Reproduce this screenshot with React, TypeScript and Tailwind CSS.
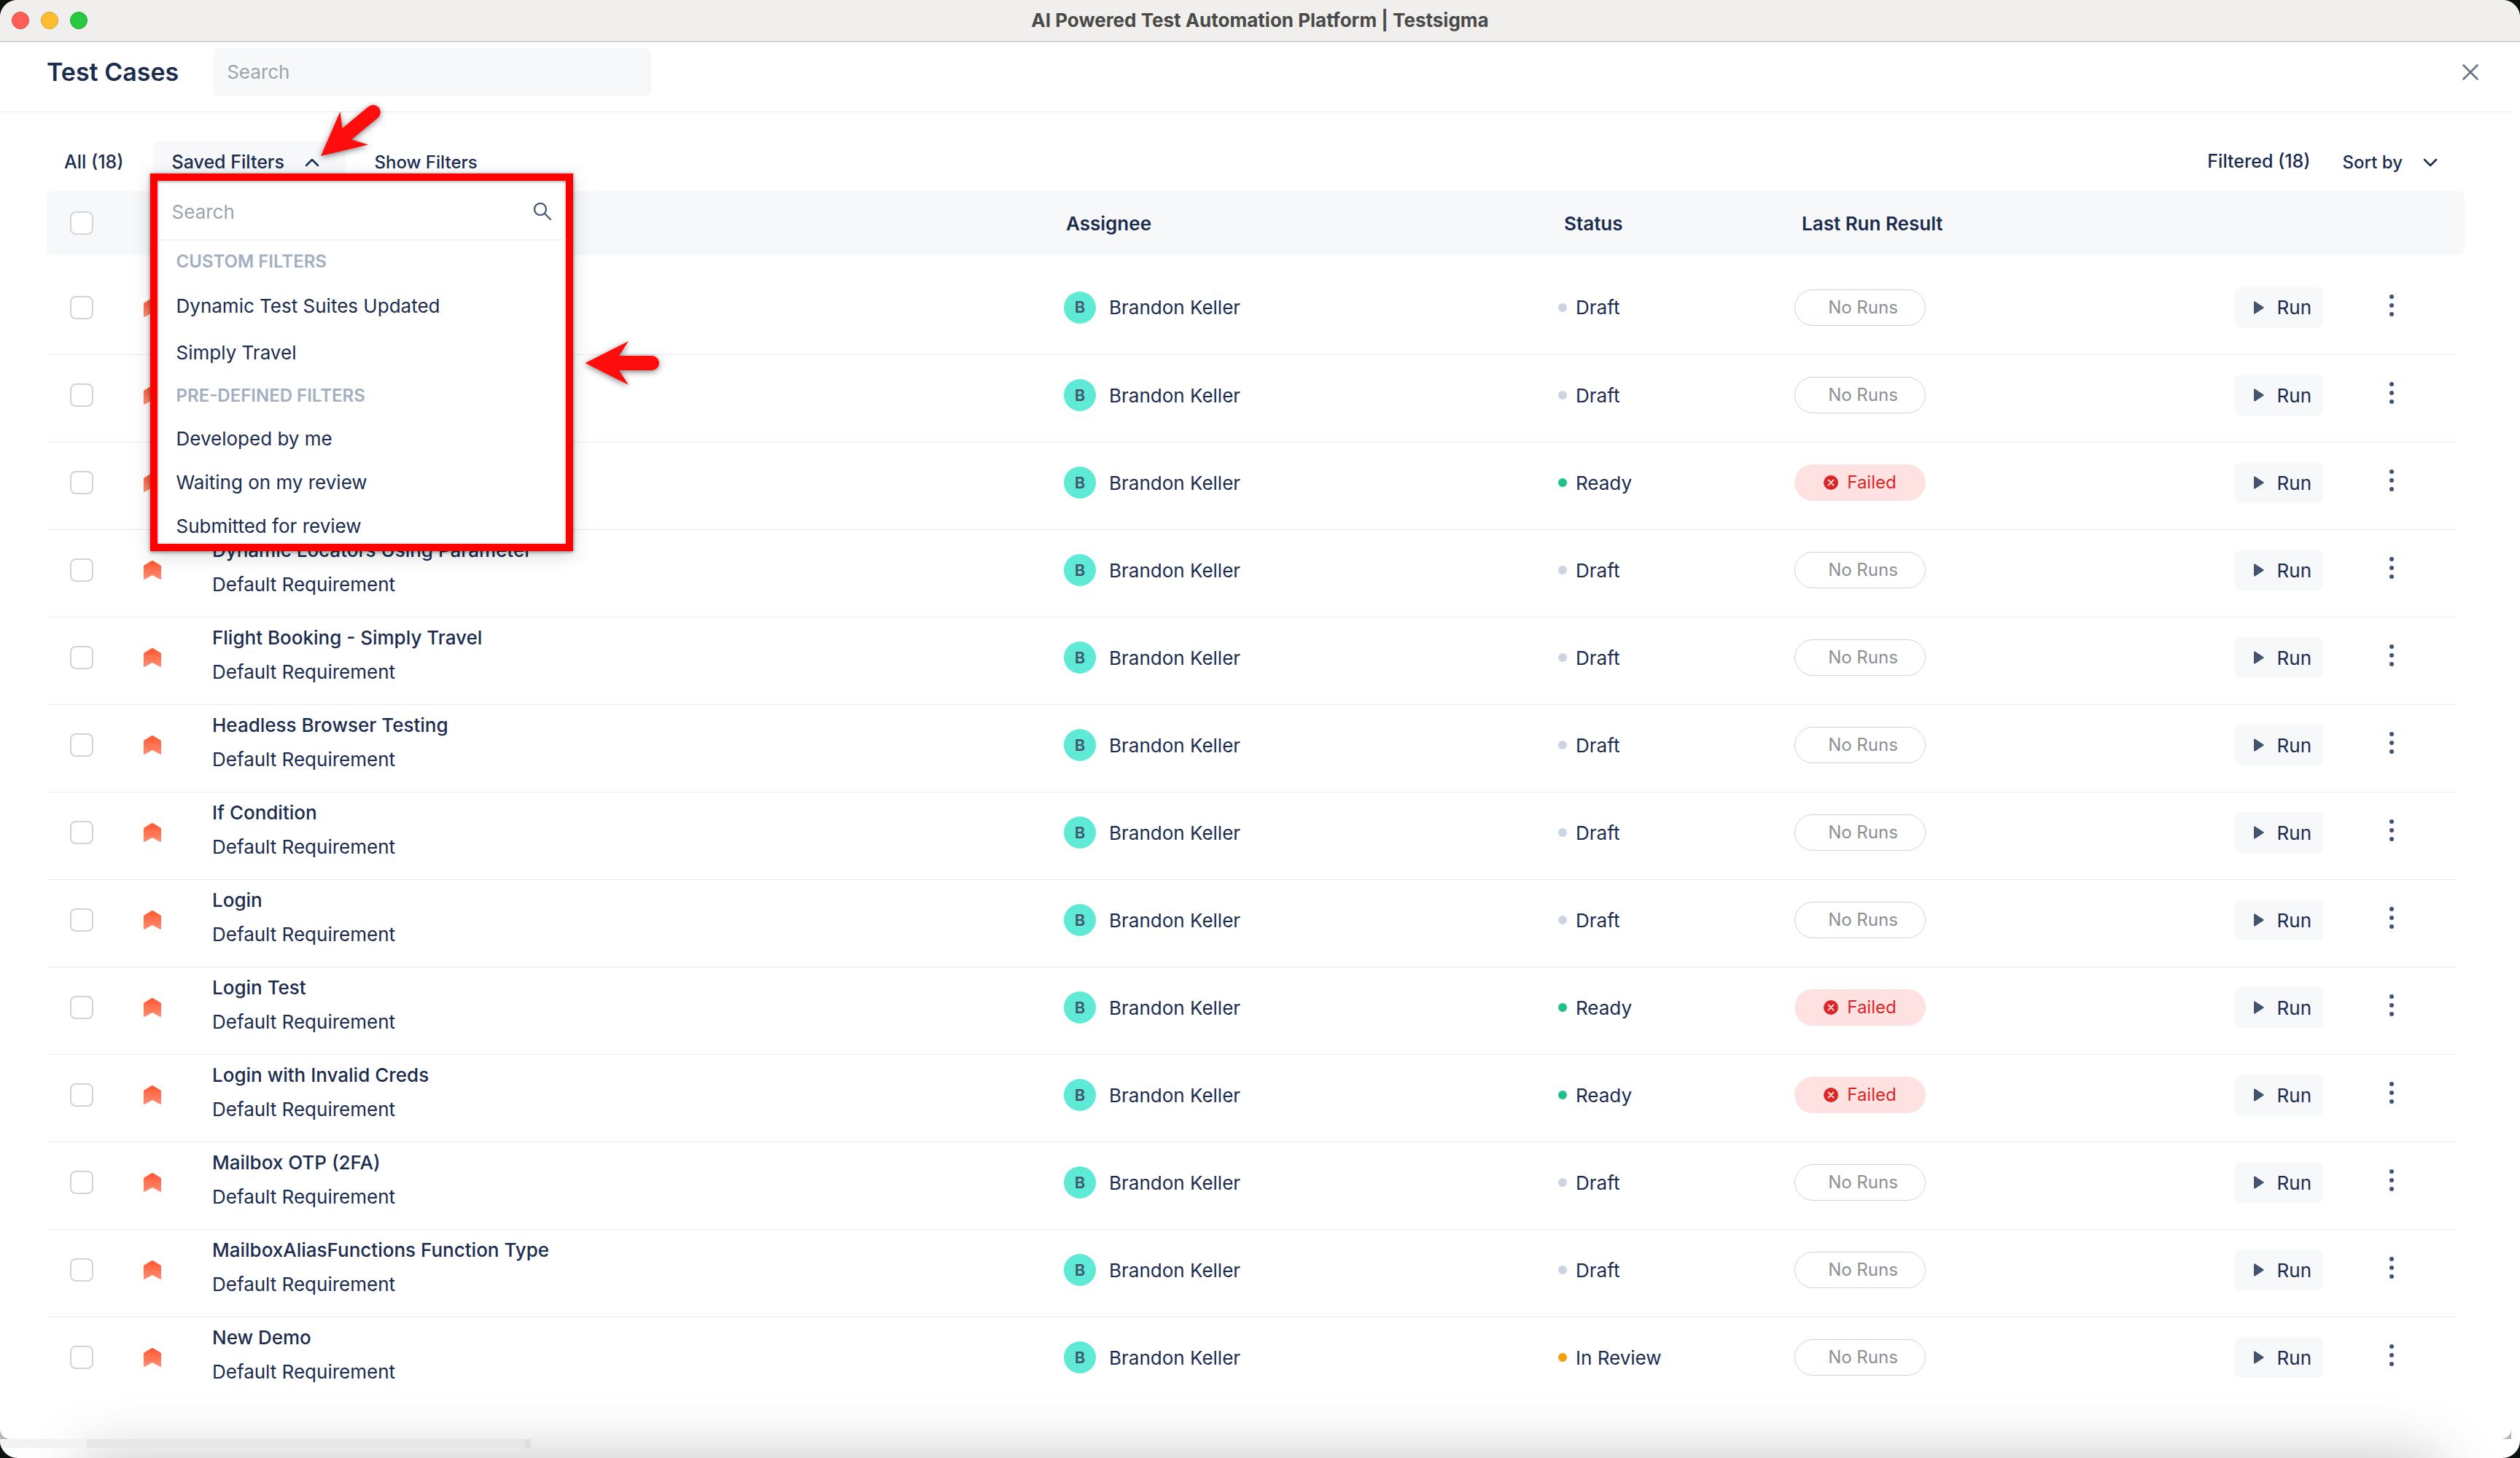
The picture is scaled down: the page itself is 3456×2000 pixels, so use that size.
import { useState } from 'react'

const savedFilters = [
    {
        title: "CUSTOM FILTERS",
        items: ["Dynamic Test Suites Updated", "Simply Travel"],
        itemClass: "h-16"
    },
    {
        title: "PRE-DEFINED FILTERS",
        items: ["Developed by me", "Waiting on my review", "Submitted for review"],
        itemClass: "h-15"
    }
]

const testCases = [
    { name: "", status: "Draft", result: "No Runs" },
    { name: "", status: "Draft", result: "No Runs" },
    { name: "", status: "Ready", result: "Failed" },
    { name: "Dynamic Locators Using Parameter", status: "Draft", result: "No Runs" },
    { name: "Flight Booking - Simply Travel", status: "Draft", result: "No Runs" },
    { name: "Headless Browser Testing", status: "Draft", result: "No Runs" },
    { name: "If Condition", status: "Draft", result: "No Runs" },
    { name: "Login", status: "Draft", result: "No Runs" },
    { name: "Login Test", status: "Ready", result: "Failed" },
    { name: "Login with Invalid Creds", status: "Ready", result: "Failed" },
    { name: "Mailbox OTP (2FA)", status: "Draft", result: "No Runs" },
    { name: "MailboxAliasFunctions Function Type", status: "Draft", result: "No Runs" },
    { name: "New Demo", status: "In Review", result: "No Runs" }
]

const statusColors: Record<string, string> = {
    "Draft": "bg-[#cbd5e1]",
    "Ready": "bg-[#1fc08b]",
    "In Review": "bg-[#f59e0b]"
}

function Checkbox({ label }: { label: string }) {
    return (
        <input
            type="checkbox"
            aria-label={label}
            className="block size-8 appearance-none rounded-lg border-2 border-[#d1d5db] bg-white checked:bg-[#1b2c4f]"
        />
    )
}

function Chevron({ up = false }: { up?: boolean }) {
    return (
        <svg width="20" height="12" viewBox="0 0 20 12" fill="none" stroke="#1b2c4f" strokeWidth="2.500" strokeLinecap="round" strokeLinejoin="round">
            <path d={up ? "M2 10 10 2l8 8" : "M2 2l8 8 8-8"} />
        </svg>
    )
}

function PriorityIcon() {
    return (
        <svg width="24" height="28" viewBox="0 0 24 28">
            <defs>
                <linearGradient id="priority" x1="0" y1="0" x2="0" y2="1">
                    <stop offset="0" stopColor="#ff5630" />
                    <stop offset="1" stopColor="#ff8f73" />
                </linearGradient>
            </defs>
            <path fill="url(#priority)" d="M11 1.300Q12 .7 13 1.300L23 7.200Q24 7.800 24 9V25.500Q24 27.800 22 26.600L13 21.500Q12 21 11 21.500L2 26.600Q0 27.800 0 25.500V9Q0 7.800 1 7.200Z" />
        </svg>
    )
}

function ResultBadge({ result }: { result: string }) {
    if (result === "Failed") {
        return (
            <span className="flex h-[50px] w-[180px] items-center justify-center gap-3 rounded-full bg-[#fee2e2] text-2xl text-[#dc2626]">
                <svg width="20" height="20" viewBox="0 0 20 20">
                    <circle cx="10" cy="10" r="10" fill="#dc2626" />
                    <path d="M6.500 6.500l7 7m0-7l-7 7" stroke="#fee2e2" strokeWidth="1.800" strokeLinecap="round" />
                </svg>
                Failed
            </span>
        )
    }
    return (
        <span className="flex h-[50px] w-[180px] items-center justify-center rounded-full border border-[#cbd5e1] pl-2 text-2xl text-[#8b8f96]">
            {result}
        </span>
    )
}

function TitleBar() {
    return (
        <div className="grid h-[58px] grid-cols-[1fr_auto_1fr] items-center border-b-2 border-[#d6d6d6] bg-[#f0efed]">
            <div className="flex gap-4 pl-4">
                <div className="size-6 rounded-full border border-[#e0443e] bg-[#ff5f57]"></div>
                <div className="size-6 rounded-full border border-[#dea123] bg-[#febc2e]"></div>
                <div className="size-6 rounded-full border border-[#1aab29] bg-[#28c840]"></div>
            </div>
            <h1 className="text-[26px] leading-8 font-bold text-[#4a4a48]">AI Powered Test Automation Platform | Testsigma</h1>
        </div>
    )
}

function SavedFiltersMenu() {
    return (
        <div className="absolute top-[44px] -left-1 z-10 h-[518px] w-[580px] overflow-hidden border-[10px] border-[#ff0000] bg-white shadow-[0_1px_5px_rgba(0,0,0,0.5),0_6px_24px_rgba(0,0,0,0.15),inset_0_1px_4px_rgba(0,0,0,0.4)]">
            <label className="flex h-[82px] items-center justify-between border-b-2 border-[#f1f2f4] px-5 pt-1">
                <input type="text" placeholder="Search" aria-label="Search filters" className="w-100 outline-none placeholder:text-[#9ca3af]" />
                <svg width="24" height="24" viewBox="0 0 24 24" fill="none" stroke="#44546f" strokeWidth="2.200" strokeLinecap="round">
                    <circle cx="9" cy="9" r="8" />
                    <path d="M15 15l8 8" />
                </svg>
            </label>
            <div className="pt-px">
                {savedFilters.map((group) => {
                    return (
                        <div key={group.title}>
                            <h3 className="flex h-14 items-center px-[26px] text-2xl font-semibold text-[#a3afc0]">{group.title}</h3>
                            {group.items.map((item) => (
                                <button key={item} className={`block w-full px-[26px] text-left hover:bg-[#f7f8fa] ${group.itemClass}`}>{item}</button>
                            ))}
                        </div>
                    )
                })}
            </div>
        </div>
    )
}

function Toolbar() {
    const [menuOpen, setMenuOpen] = useState<boolean>(true)

    return (
        <div className="flex h-[68px] items-start pr-[113px] pl-[88px] text-[25px] font-medium">
            <button className="h-[58px]">All (18)</button>
            <div className="relative ml-10 text-[26px] font-normal">
                <button onClick={() => setMenuOpen(!menuOpen)}
                    className="flex h-[58px] w-[264px] items-center justify-between rounded-lg bg-[#f7f8fa] pr-9 pl-[26px] text-[25px] font-medium">
                    Saved Filters
                    <Chevron up={menuOpen} />
                </button>
                {menuOpen && <SavedFiltersMenu />}
            </div>
            <button className="ml-10 h-[58px] text-2xl">Show Filters</button>
            <span className="ml-auto flex h-14 items-center">Filtered (18)</span>
            <button className="ml-11 flex h-[58px] items-center gap-7 text-2xl">
                Sort by
                <Chevron />
            </button>
        </div>
    )
}

function TestCaseTable() {
    return (
        <table className="w-full table-fixed border-collapse text-left">
            <thead>
                <tr className="h-22 bg-[#f7f8fa]">
                    <th className="w-[133px] rounded-l-lg pl-8"><Checkbox label="Select all" /></th>
                    <th className="w-[94px]"></th>
                    <th></th>
                    <th className="w-[678px] pl-[3px] font-semibold">Assignee</th>
                    <th className="w-[324px] pl-2 font-semibold">Status</th>
                    <th className="w-[604px] pl-[10px] font-semibold">Last Run Result</th>
                    <th className="w-[204px]"></th>
                    <th className="w-[99px]"></th>
                    <th className="w-3 rounded-r-lg"></th>
                </tr>
            </thead>
            <tbody className="before:block before:h-4">
                {testCases.map((test, index) => {
                    return (
                        <tr key={index} className="h-30 *:pb-2 not-last:[&>td:not(:last-child)]:border-b not-last:[&>td:not(:last-child)]:border-[#e8eaed]">
                            <td className="pl-8"><Checkbox label={test.name || `Test case ${index + 1}`} /></td>
                            <td><PriorityIcon /></td>
                            <td className="leading-[47px]">
                                {test.name && <div className="mb-2">
                                    <a href="#" className="block font-medium">{test.name}</a>
                                    <p>Default Requirement</p>
                                </div>}
                            </td>
                            <td>
                                <div className="flex items-center gap-[18px]">
                                    <span className="flex size-11 items-center justify-center rounded-full bg-[#5eead4] text-[22px] font-semibold text-[#44546f]">B</span>
                                    Brandon Keller
                                </div>
                            </td>
                            <td>
                                <div className="flex items-center gap-3">
                                    <span className={`size-3 rounded-full ${statusColors[test.status]}`}></span>
                                    {test.status}
                                </div>
                            </td>
                            <td><ResultBadge result={test.result} /></td>
                            <td>
                                <button className="flex h-14 w-[121px] items-center justify-between rounded-lg bg-[#f7f8fa] pr-4 pl-[26px]">
                                    <svg width="14" height="18" viewBox="0 0 14 18" fill="#44546f">
                                        <path d="M0 1.500Q0 0 1.500 .6L13.300 8.200Q14.300 9 13.300 9.800L1.500 17.400Q0 18 0 16.500Z" />
                                    </svg>
                                    Run
                                </button>
                            </td>
                            <td>
                                <button aria-label="More actions" className="block px-2 pb-[6px]">
                                    <svg width="6" height="30" viewBox="0 0 6 30" fill="#44546f">
                                        <circle cx="3" cy="3" r="3" />
                                        <circle cx="3" cy="15" r="3" />
                                        <circle cx="3" cy="27" r="3" />
                                    </svg>
                                </button>
                            </td>
                            <td></td>
                        </tr>
                    )
                })}
            </tbody>
        </table>
    )
}

export default function App() {
    return (
        <div className="min-h-screen bg-[#0b1210]">
            <div className="relative flex min-h-screen flex-col overflow-hidden rounded-3xl bg-white font-[Inter,sans-serif] text-[26px] text-[#1b2c4f]">
                <TitleBar />
                <header className="mr-3 flex h-24 items-center border-b border-[#e5e7eb] pr-[41px] pb-[14px] pl-16">
                    <h2 className="text-[34px] font-semibold">Test Cases</h2>
                    <input type="text" placeholder="Search" aria-label="Search test cases"
                        className="ml-12 h-[66px] w-[600px] rounded-lg bg-[#f7f8fa] px-[18px] outline-none placeholder:text-[#9ca3af]" />
                    <button aria-label="Close" className="ml-auto p-1">
                        <svg width="22" height="22" viewBox="0 0 22 22" stroke="#64748b" strokeWidth="2.500" strokeLinecap="round">
                            <path d="M1.500 1.500l19 19m0-19l-19 19" />
                        </svg>
                    </button>
                </header>
                <main className="pt-10">
                    <Toolbar />
                    <div className="pr-19 pl-16">
                        <TestCaseTable />
                    </div>
                </main>

                {/* shade along the bottom edge and the status strip */}
                <div className="absolute top-full right-28 left-28 h-40 shadow-[0_0_85px_rgba(0,0,0,0.23)]"></div>
                <div className="absolute bottom-[14px] left-0 flex h-3">
                    <div className="w-[120px] border-r border-[#dfe1e4] bg-[#f1f2f4]"></div>
                    <div className="w-[600px] bg-[#e5e7e9]"></div>
                    <div className="w-2 bg-[#dddfe1]"></div>
                </div>
                <svg className="absolute bottom-[26px] left-0" width="14" height="14" viewBox="0 0 14 14">
                    <path d="M0 0Q1 13 14 14H0Z" fill="#b6b7bb" />
                </svg>
                <svg className="absolute right-3 bottom-[26px]" width="14" height="14" viewBox="0 0 14 14">
                    <path d="M14 0Q13 13 0 14H14Z" fill="#b6b7bb" />
                </svg>

                {/* callout arrows */}
                <svg className="absolute top-[120px] left-[420px] z-20 drop-shadow-[0_2px_4px_rgba(0,0,0,0.5)]" width="120" height="110" viewBox="420 120 120 110" fill="#ff0d0d">
                    <path d="M440 214L466.500 153L469.500 176L505 146.500A10 10 0 0 1 518.500 161.500L482 191.500L505 198.500Z" />
                </svg>
                <svg className="absolute top-[455px] left-[795px] z-20 drop-shadow-[0_2px_4px_rgba(0,0,0,0.5)]" width="120" height="85" viewBox="795 455 120 85" fill="#ff0d0d">
                    <path d="M802.500 498L862 468L849 488H894A10 10 0 0 1 894 508H849L862 528Z" />
                </svg>
            </div>
        </div>
    )
}
